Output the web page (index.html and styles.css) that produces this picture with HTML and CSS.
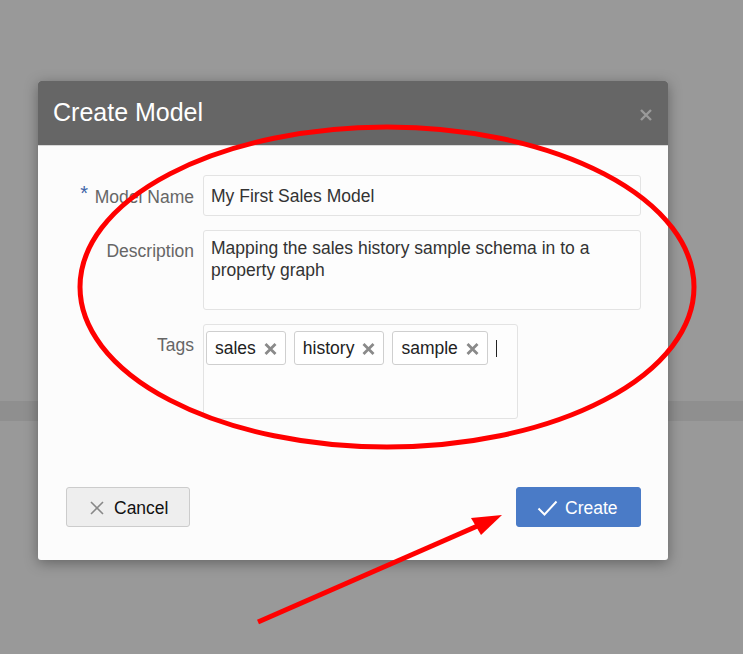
FILE: index.html
```html
<!DOCTYPE html>
<html>
<head>
<meta charset="utf-8">
<link rel="stylesheet" href="styles.css">
</head>
<body>
<div class="page">
  <div class="band"></div>
</div>

<div class="dialog">
  <div class="dlg-head">
    <span class="dlg-title">Create Model</span>
    <svg class="dlg-close" width="12" height="12" viewBox="0 0 12 12"><path d="M1 1L11 11M11 1L1 11" stroke="#9a9a9a" stroke-width="2.4" fill="none"/></svg>
  </div>
  <div class="dlg-body">
    <div class="form">
      <label class="lbl"><span class="req">*</span> Model Name</label>
      <div class="field input">My First Sales Model</div>

      <label class="lbl">Description</label>
      <div class="field textarea">Mapping the sales history sample schema in to a property graph</div>

      <label class="lbl">Tags</label>
      <div class="tagbox">
        <span class="chip">sales<svg class="chip-x" width="13" height="12" viewBox="0 0 13 12"><path d="M1.5 1L11.5 11M11.5 1L1.5 11" stroke="#8a8a8a" stroke-width="2.8" fill="none"/></svg></span>
        <span class="chip">history<svg class="chip-x" width="13" height="12" viewBox="0 0 13 12"><path d="M1.5 1L11.5 11M11.5 1L1.5 11" stroke="#8a8a8a" stroke-width="2.8" fill="none"/></svg></span>
        <span class="chip">sample<svg class="chip-x" width="13" height="12" viewBox="0 0 13 12"><path d="M1.5 1L11.5 11M11.5 1L1.5 11" stroke="#8a8a8a" stroke-width="2.8" fill="none"/></svg></span>
        <span class="caret"></span>
      </div>
    </div>
    <div class="footer">
      <button class="btn btn-cancel"><svg width="14" height="14" viewBox="0 0 14 14"><path d="M1 1L13 13M13 1L1 13" stroke="#888" stroke-width="1.6" fill="none"/></svg>Cancel</button>
      <button class="btn btn-create"><svg width="21" height="17" viewBox="0 0 21 17"><path d="M1.5 8.5L7.5 14.5L19.5 1.5" stroke="#fff" stroke-width="2" fill="none"/></svg>Create</button>
    </div>
  </div>
</div>

<svg class="annot" width="743" height="654" viewBox="0 0 743 654">
  <ellipse cx="387" cy="287" rx="307" ry="160" fill="none" stroke="#ff0000" stroke-width="5"/>
  <line x1="258" y1="622" x2="482" y2="524" stroke="#ff0000" stroke-width="5"/>
  <polygon points="502,515 471,518 481,535" fill="#ff0000"/>
</svg>
</body>
</html>
```

FILE: styles.css
```css
html, body {
  margin: 0;
  padding: 0;
}
body {
  width: 743px;
  height: 654px;
  overflow: hidden;
  background: #999999;
  font-family: "Liberation Sans", Arial, sans-serif;
  position: relative;
}
.page {
  padding-top: 401px;
}
.band {
  height: 20px;
  background: #8f8f8f;
}
.dialog {
  position: absolute;
  left: 38px;
  top: 81px;
  width: 630px;
  background: #fcfcfc;
  border-radius: 3px;
  box-shadow: 0 3px 14px rgba(0, 0, 0, 0.35);
}
.dlg-head {
  height: 65px;
  background: #666666;
  border-radius: 3px 3px 0 0;
  display: flex;
  align-items: center;
  justify-content: space-between;
  padding: 0 16px 0 15px;
  border-bottom: 1px solid #d8d8d8;
  box-sizing: border-box;
}
.dlg-title {
  color: #ffffff;
  font-size: 25px;
  margin-top: -1px;
}
.dlg-close {
  margin-top: 3px;
}
.dlg-body {
  padding: 29px 27px 33px 28px;
}
.form {
  display: grid;
  grid-template-columns: 128px 438px;
  column-gap: 9px;
  row-gap: 14px;
  align-items: start;
}
.lbl {
  text-align: right;
  color: #666666;
  font-size: 17.5px;
  line-height: 22px;
  padding-top: 10px;
  white-space: nowrap;
}
.req {
  color: #3d64a8;
  font-size: 20px;
  position: relative;
  top: -3px;
  margin-right: 2px;
}
.field {
  box-sizing: border-box;
  border: 1px solid #e3e3e3;
  border-radius: 3px;
  background: #fdfdfd;
  color: #333333;
  font-size: 17.5px;
  line-height: 22px;
  padding: 9px 7px;
}
.input {
  height: 41px;
}
.textarea {
  height: 80px;
  padding-top: 6px;
}
.tagbox {
  box-sizing: border-box;
  width: 315px;
  height: 95px;
  border: 1px solid #e3e3e3;
  border-radius: 3px;
  background: #fdfdfd;
  padding: 6px 2px;
  display: flex;
  align-items: flex-start;
  gap: 8px;
}
.chip {
  box-sizing: border-box;
  height: 34px;
  display: inline-flex;
  align-items: center;
  border: 1px solid #cfcfcf;
  border-radius: 3px;
  background: #ffffff;
  color: #222222;
  font-size: 17.5px;
  padding: 0 8px 0 8px;
  gap: 8px;
}
.chip-x {
  margin-top: 1px;
}
.caret {
  width: 1px;
  height: 17px;
  background: #222;
  margin-top: 9px;
  margin-left: 0;
}
.footer {
  display: flex;
  justify-content: space-between;
  margin-top: 68px;
}
.btn {
  box-sizing: border-box;
  height: 40px;
  border-radius: 3px;
  font-family: "Liberation Sans", Arial, sans-serif;
  font-size: 17.5px;
  display: inline-flex;
  align-items: center;
  padding: 0;
  padding-top: 2px;
  cursor: pointer;
}
.btn-cancel {
  width: 124px;
  background: #eeeeee;
  border: 1px solid #cccccc;
  color: #111111;
  padding-left: 23px;
  gap: 10px;
}
.btn-create {
  width: 125px;
  background: #4a7bc7;
  border: 1px solid #4a7bc7;
  color: #ffffff;
  padding-left: 20px;
  gap: 7px;
}
.annot {
  position: absolute;
  left: 0;
  top: 0;
  pointer-events: none;
}
```
